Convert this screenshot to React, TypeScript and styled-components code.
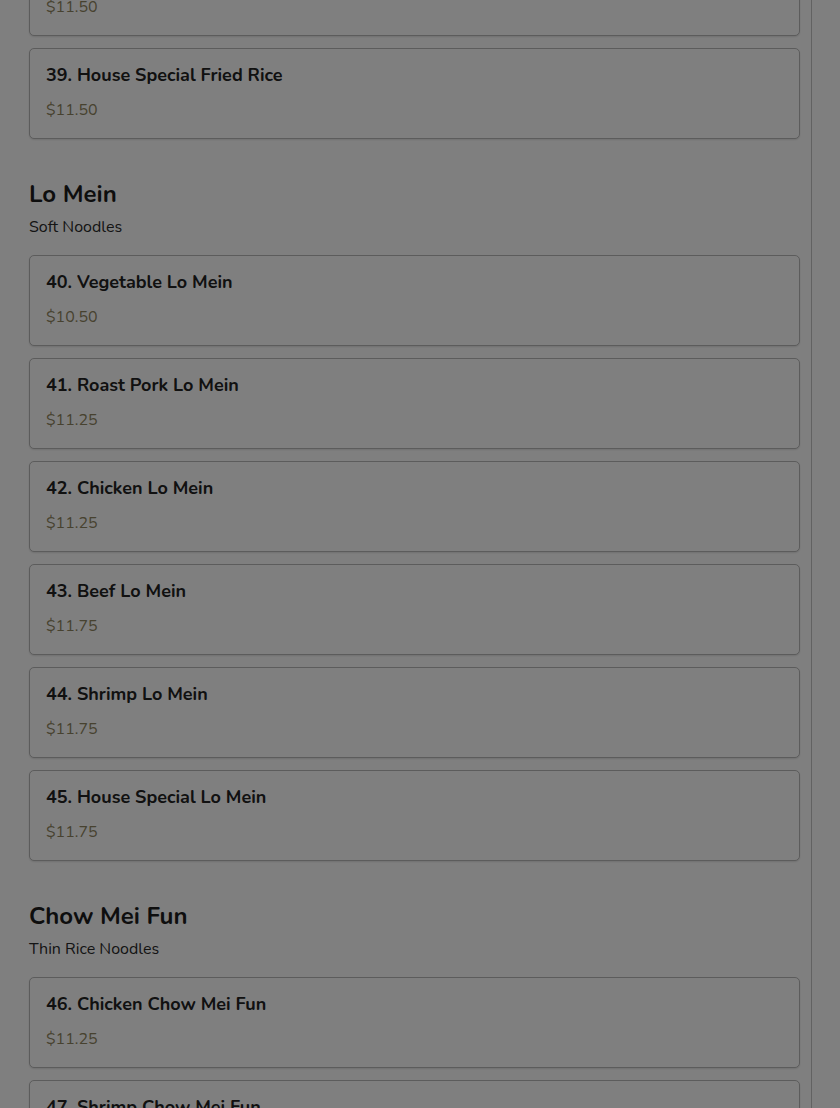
import styled, { createGlobalStyle } from 'styled-components';

interface IMenuItem {
  id: number;
  name: string;
  price: string;
}

interface ISection {
  title?: string;
  subtitle?: string;
  items: IMenuItem[];
}

const sections: ISection[] = [
  {
    items: [
      { id: 38, name: 'Shrimp Fried Rice', price: '$11.50' },
      { id: 39, name: 'House Special Fried Rice', price: '$11.50' },
    ],
  },
  {
    title: 'Lo Mein',
    subtitle: 'Soft Noodles',
    items: [
      { id: 40, name: 'Vegetable Lo Mein', price: '$10.50' },
      { id: 41, name: 'Roast Pork Lo Mein', price: '$11.25' },
      { id: 42, name: 'Chicken Lo Mein', price: '$11.25' },
      { id: 43, name: 'Beef Lo Mein', price: '$11.75' },
      { id: 44, name: 'Shrimp Lo Mein', price: '$11.75' },
      { id: 45, name: 'House Special Lo Mein', price: '$11.75' },
    ],
  },
  {
    title: 'Chow Mei Fun',
    subtitle: 'Thin Rice Noodles',
    items: [
      { id: 46, name: 'Chicken Chow Mei Fun', price: '$11.25' },
      { id: 47, name: 'Shrimp Chow Mei Fun', price: '$11.75' },
      { id: 48, name: 'Beef Chow Mei Fun', price: '$11.75' },
    ],
  },
];

function App(): JSX.Element {
  return (
    <>
      <GlobalStyle />
      <Page>
        <Menu>
          {sections.map((section, i) => (
            <Section key={i}>
              {section.title && (
                <SectionHead>
                  <SectionTitle>{section.title}</SectionTitle>
                  <SectionSub>{section.subtitle}</SectionSub>
                </SectionHead>
              )}
              <List>
                {section.items.map((el) => (
                  <Item key={el.id}>
                    <Name>
                      {el.id}. {el.name}
                    </Name>
                    <Price>{el.price}</Price>
                  </Item>
                ))}
              </List>
            </Section>
          ))}
        </Menu>
      </Page>
      <Backdrop />
    </>
  );
}

export default App;

const GlobalStyle = createGlobalStyle`
  * {
    box-sizing: border-box;
  }

  html,
  body {
    margin: 0;
    padding: 0;
    background: #fff;
    overflow: hidden;
  }

  body {
    font-family: Nunito, Lato, 'Open Sans', sans-serif;
    color: #212121;
  }
`;

const Page = styled.div`
  display: flex;
  height: 1108px;
  overflow: hidden;
`;

const Menu = styled.main`
  width: 812px;
  margin-top: -55px;
  padding: 0 11px 0 29px;
  border-right: 1px solid #c4c4c4;
  display: flex;
  flex-direction: column;
  gap: 40px;
`;

const Section = styled.section`
  display: flex;
  flex-direction: column;
  gap: 17px;
`;

const SectionHead = styled.header`
  display: flex;
  flex-direction: column;
  gap: 7px;
`;

const SectionTitle = styled.h2`
  margin: 0;
  font-size: 24px;
  font-weight: 700;
  line-height: 30px;
  color: #1c1c1c;
`;

const SectionSub = styled.p`
  margin: 0;
  font-size: 16px;
  line-height: 22px;
  color: #2a2a2a;
`;

const List = styled.ul`
  margin: 0;
  padding: 0;
  list-style: none;
  display: flex;
  flex-direction: column;
  gap: 12px;
`;

const Item = styled.li`
  height: 91px;
  padding: 14px 16px;
  border: 1px solid #b8b8b8;
  border-radius: 5px;
  background: #fff;
  box-shadow: 0 1px 2px rgba(0, 0, 0, 0.12);
  display: flex;
  flex-direction: column;
  gap: 11px;
`;

const Name = styled.h3`
  margin: 0;
  font-size: 18px;
  font-weight: 700;
  line-height: 24px;
  color: #222;
`;

const Price = styled.span`
  font-size: 16px;
  line-height: 24px;
  color: #8f8560;
`;

const Backdrop = styled.div`
  position: fixed;
  inset: 0;
  background: rgba(0, 0, 0, 0.5);
`;
